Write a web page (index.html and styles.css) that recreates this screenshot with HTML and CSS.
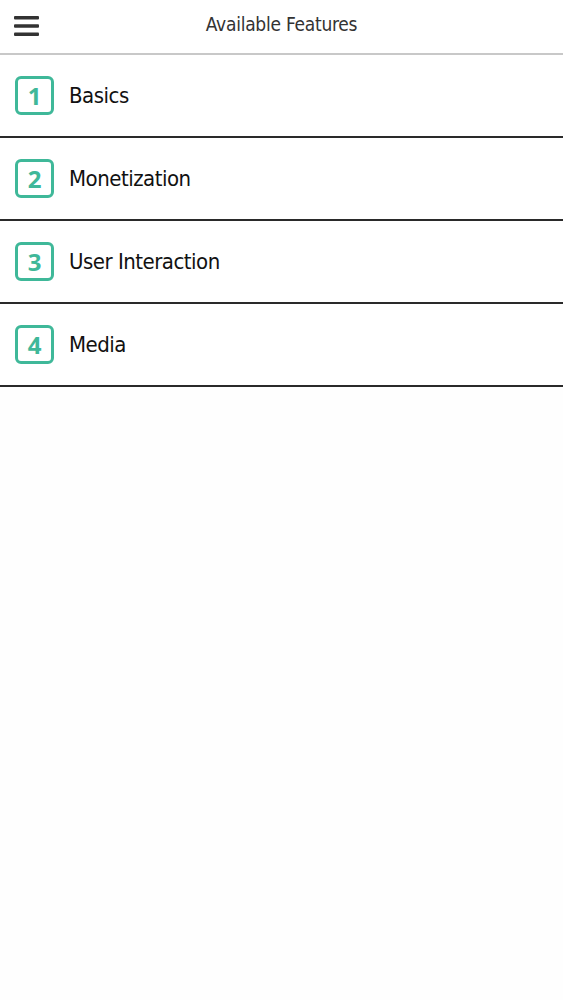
FILE: index.html
```html
<!DOCTYPE html>
<html lang="en">
<head>
    <meta charset="UTF-8">
    <meta name="viewport" content="width=device-width, initial-scale=1.0">
    <title>Available Features</title>
    <link rel="stylesheet" href="styles.css">
</head>
<body>
    <div class="header">
        <div class="menu-btn">
            <svg width="26" height="22" viewBox="0 0 26 22">
                <rect x="0" y="0" width="25" height="3.6" rx="1" fill="#333"/>
                <rect x="0" y="8.2" width="25" height="3.6" rx="1" fill="#333"/>
                <rect x="0" y="16.4" width="25" height="3.6" rx="1" fill="#333"/>
            </svg>
        </div>
        <h1>Available Features</h1>
    </div>

    <!-- feature list -->
    <div class="list">
        <div class="item">
            <span class="num">1</span>
            <span class="label">Basics</span>
        </div>
        <div class="item">
            <span class="num">2</span>
            <span class="label">Monetization</span>
        </div>
        <div class="item">
            <span class="num">3</span>
            <span class="label">User Interaction</span>
        </div>
        <div class="item">
            <span class="num">4</span>
            <span class="label">Media</span>
        </div>
    </div>
</body>
</html>
```

FILE: styles.css
```css
* {
    margin: 0;
    padding: 0;
    box-sizing: border-box;
}
body {
    font-family: "DejaVu Sans", sans-serif;
    font-stretch: condensed;
    background-color: #fefefe;
    color: #111;
}
.header {
    height: 55px;
    background: #fff;
    border-bottom: 2px solid #c8c8c8;
    display: flex;
    align-items: center;
    justify-content: center;
    position: relative;
}
.menu-btn {
    position: absolute;
    left: 14px;
    top: 16px;
    line-height: 0;
}
.header h1 {
    font-size: 19px;
    font-weight: normal;
    color: #333;
    margin-top: -5px;
    letter-spacing: -0.25px;
}
.item {
    height: 83px;
    display: flex;
    align-items: center;
    padding-left: 15px;
    padding-bottom: 1px;
    border-bottom: 2px solid #2a2a2a;
    background: #fff;
}
.num {
    width: 39px;
    height: 39px;
    border: 3px solid #3fb899;
    border-radius: 6px;
    color: #3fb899;
    font-family: "Open Sans", sans-serif;
    font-stretch: normal;
    font-weight: bold;
    font-size: 24px;
    display: flex;
    align-items: center;
    justify-content: center;
    margin-right: 15px;
}
.label {
    font-size: 22px;
    letter-spacing: -0.5px;
}
```
